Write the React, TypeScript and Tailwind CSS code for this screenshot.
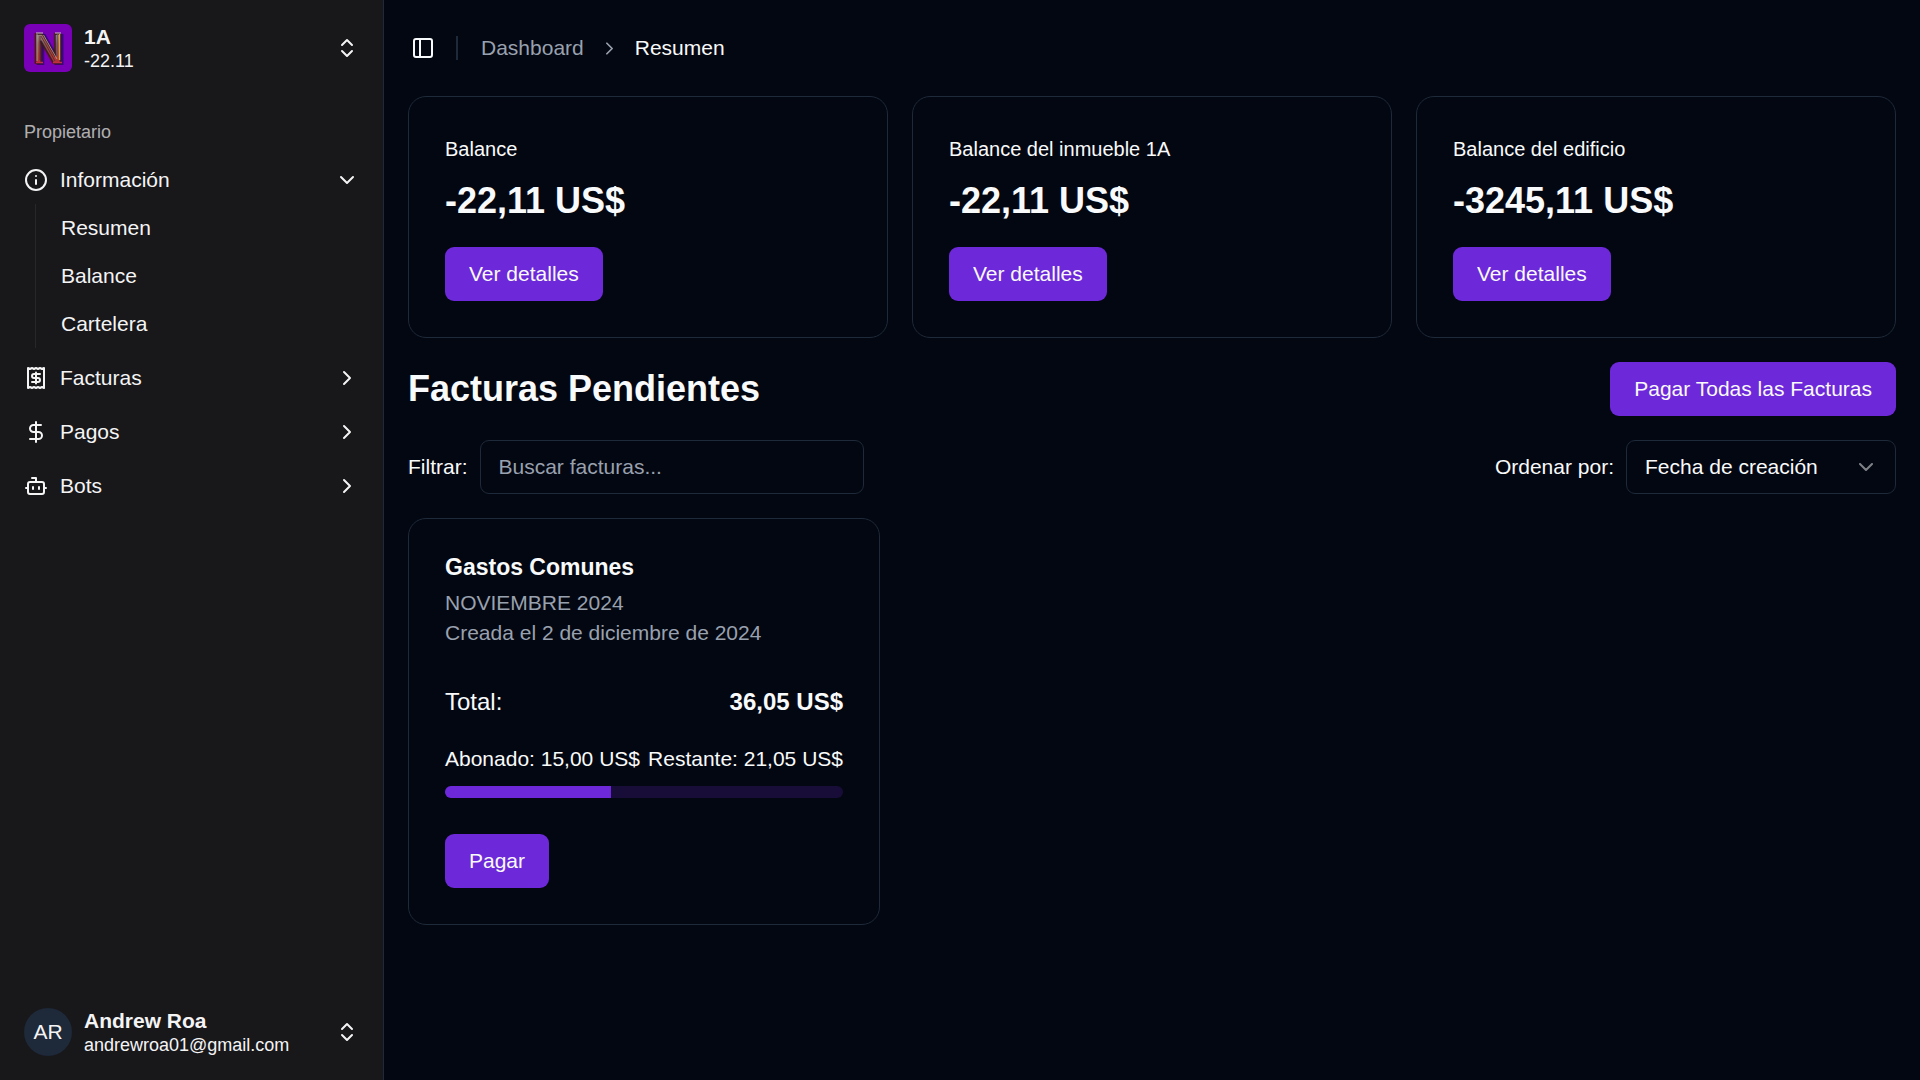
import React from "react";
import {
  Bot,
  ChevronDown,
  ChevronRight,
  ChevronsUpDown,
  DollarSign,
  Info,
  PanelLeft,
  type LucideIcon,
} from "lucide-react";

const balances = [
  { title: "Balance", amount: "-22,11 US$" },
  { title: "Balance del inmueble 1A", amount: "-22,11 US$" },
  { title: "Balance del edificio", amount: "-3245,11 US$" },
];

const infoLinks = ["Resumen", "Balance", "Cartelera"];

function BuildingLogo() {
  return (
    <svg viewBox="0 0 48 48" className="size-12 shrink-0 rounded-md" aria-hidden="true">
      <defs>
        <linearGradient id="logo-metal" x1="0" y1="0" x2="0" y2="1">
          <stop offset="0.15" stopColor="#9a8f8c" />
          <stop offset="0.4" stopColor="#8d5a4c" />
          <stop offset="0.65" stopColor="#a8402f" />
          <stop offset="0.9" stopColor="#b3263c" />
        </linearGradient>
      </defs>
      <rect width="48" height="48" fill="#7a00b8" />
      <g fontFamily="Liberation Sans, Arial, sans-serif" fontWeight="700" fontSize="42" textAnchor="middle">
        <text x="26" y="40" fill="#3d0a5c" stroke="#3d0a5c" strokeWidth="2">N</text>
        <text x="24" y="39" fill="url(#logo-metal)" stroke="#3a1a24" strokeWidth="1.5">N</text>
      </g>
      <path d="M13 10v27M19.500 11L33 35" fill="none" stroke="#b9a79a" strokeWidth="0.8" />
      <path d="M16 12v24M17 12L31 37" fill="none" stroke="#5b1f3c" strokeWidth="0.8" />
      <path d="M35.500 10v26" stroke="#dfa04c" strokeWidth="1.4" />
      <path d="M33.500 10v22" stroke="#6b4a78" strokeWidth="0.8" />
      <path d="M12 9h7M31 9h6" stroke="#c9bfb4" strokeWidth="1" />
      <path d="M12 38.500h7M29 38.500h9" stroke="#c22f45" strokeWidth="1.6" />
    </svg>
  );
}

function ReceiptIcon() {
  return (
    <svg
      viewBox="0 0 24 24"
      className="size-6 shrink-0"
      fill="none"
      stroke="currentColor"
      strokeWidth="2"
      strokeLinecap="round"
      strokeLinejoin="round"
      aria-hidden="true"
    >
      <path d="M4 2v20l2-1 2 1 2-1 2 1 2-1 2 1 2-1 2 1V2l-2 1-2-1-2 1-2-1-2 1-2-1-2 1Z" />
      <path d="M16 8h-6a2 2 0 1 0 0 4h4a2 2 0 1 1 0 4H8" />
      <path d="M12 17.500v-11" />
    </svg>
  );
}

function NavButton({
  label,
  icon,
  chevron: Chevron,
  expanded,
}: {
  label: string;
  icon: React.ReactNode;
  chevron: LucideIcon;
  expanded: boolean;
}) {
  return (
    <button
      type="button"
      aria-expanded={expanded}
      className="flex h-12 w-full items-center gap-3 rounded-lg px-3 text-left text-[21px] leading-[30px]"
    >
      {icon}
      <span className="flex-1">{label}</span>
      <Chevron className="size-6 shrink-0" />
    </button>
  );
}

function PrimaryButton({ children }: { children: React.ReactNode }) {
  return (
    <button
      type="button"
      className="h-[54px] rounded-[9px] bg-[#6d28d9] px-6 text-[21px] leading-[30px] whitespace-nowrap text-gray-50"
    >
      {children}
    </button>
  );
}

function Sidebar() {
  return (
    <aside className="sticky top-0 flex h-screen w-96 shrink-0 flex-col border-r border-gray-800 bg-zinc-900 text-zinc-100">
      <div className="p-3">
        <button type="button" className="flex h-[72px] w-full items-center gap-3 rounded-lg px-3 text-left">
          <BuildingLogo />
          <span className="grid flex-1">
            <span className="text-[21px] leading-[26px] font-bold">1A</span>
            <span className="text-[18px] leading-[22px]">-22.11</span>
          </span>
          <ChevronsUpDown className="size-6 shrink-0" />
        </button>
      </div>

      <nav aria-label="Propietario" className="flex-1 p-3">
        <h2 className="flex h-12 items-center px-3 text-[18px] leading-6 text-zinc-100/70">Propietario</h2>
        <ul className="flex flex-col gap-1.5">
          <li>
            <NavButton label="Información" icon={<Info className="size-6 shrink-0" />} chevron={ChevronDown} expanded />
            <ul className="mr-5 ml-[23px] flex flex-col gap-1.5 border-l border-zinc-800 py-[3px] pl-[13px]">
              {infoLinks.map((label) => (
                <li key={label}>
                  <a href="#" className="flex h-[42px] items-center px-3 text-[21px] leading-[30px]">
                    {label}
                  </a>
                </li>
              ))}
            </ul>
          </li>
          <li>
            <NavButton label="Facturas" icon={<ReceiptIcon />} chevron={ChevronRight} expanded={false} />
          </li>
          <li>
            <NavButton label="Pagos" icon={<DollarSign className="size-6 shrink-0" />} chevron={ChevronRight} expanded={false} />
          </li>
          <li>
            <NavButton label="Bots" icon={<Bot className="size-6 shrink-0" />} chevron={ChevronRight} expanded={false} />
          </li>
        </ul>
      </nav>

      <div className="p-3">
        <button type="button" className="flex h-[72px] w-full items-center gap-3 rounded-lg px-3 text-left">
          <span className="flex size-12 shrink-0 items-center justify-center rounded-full bg-gray-800 text-[21px] leading-[30px]">
            AR
          </span>
          <span className="grid flex-1">
            <span className="text-[21px] leading-[26px] font-bold">Andrew Roa</span>
            <span className="text-[18px] leading-[22px]">andrewroa01@gmail.com</span>
          </span>
          <ChevronsUpDown className="size-6 shrink-0" />
        </button>
      </div>
    </aside>
  );
}

function TopBar() {
  return (
    <header className="flex h-24 items-center gap-3 pr-6 pl-[18px]">
      <button type="button" aria-label="Alternar barra lateral" className="flex size-[42px] items-center justify-center">
        <PanelLeft className="size-6" />
      </button>
      <div className="mr-[11px] h-6 w-0.5 bg-gray-800" />
      <nav aria-label="Ruta">
        <ol className="flex items-center gap-[15px] text-[21px] leading-[30px]">
          <li>
            <a href="#" className="text-gray-400">Dashboard</a>
          </li>
          <li aria-hidden="true" className="text-gray-400">
            <ChevronRight className="size-[21px]" />
          </li>
          <li aria-current="page">Resumen</li>
        </ol>
      </nav>
    </header>
  );
}

function InvoiceCard() {
  const paid = 15;
  const total = 36.05;
  return (
    <article className="rounded-[18px] border border-gray-800 p-9">
      <h3 className="text-[23px] leading-6 font-bold">Gastos Comunes</h3>
      <div className="mt-[9px] text-[21px] leading-[30px] text-gray-400">
        <p>NOVIEMBRE 2024</p>
        <p>Creada el 2 de diciembre de 2024</p>
      </div>
      <div className="mt-9 flex justify-between text-2xl leading-9">
        <span>Total:</span>
        <span className="font-bold">36,05 US$</span>
      </div>
      <div className="mt-6 flex justify-between text-[21px] leading-[30px] whitespace-nowrap">
        <span>Abonado: 15,00 US$</span>
        <span>Restante: 21,05 US$</span>
      </div>
      <div
        role="progressbar"
        aria-label="Abonado"
        aria-valuemin={0}
        aria-valuemax={total}
        aria-valuenow={paid}
        className="mt-3 mb-9 h-3 overflow-hidden rounded-full bg-[#6d28d9]/20"
      >
        <div className="h-full bg-[#6d28d9]" style={{ width: `${(paid / total) * 100}%` }} />
      </div>
      <PrimaryButton>Pagar</PrimaryButton>
    </article>
  );
}

export default function App() {
  return (
    <div className="flex min-h-screen bg-[#030711] font-['Liberation_Sans',Arial,sans-serif] text-gray-50">
      <Sidebar />
      <div className="min-w-0 flex-1">
        <TopBar />
        <main className="flex flex-col gap-6 px-6 pb-6">
          <section className="grid grid-cols-3 gap-6">
            {balances.map(({ title, amount }) => (
              <article key={title} className="rounded-[18px] border border-gray-800 p-9">
                <h3 className="text-xl leading-8">{title}</h3>
                <p className="mt-3 mb-[22px] text-4xl leading-[48px] font-bold">{amount}</p>
                <PrimaryButton>Ver detalles</PrimaryButton>
              </article>
            ))}
          </section>

          <div className="flex items-center justify-between">
            <h1 className="text-4xl leading-[54px] font-bold">Facturas Pendientes</h1>
            <PrimaryButton>Pagar Todas las Facturas</PrimaryButton>
          </div>

          <div className="flex items-center justify-between text-[21px] leading-[30px]">
            <div className="flex items-center gap-3">
              <label htmlFor="filter">Filtrar:</label>
              <input
                id="filter"
                type="text"
                placeholder="Buscar facturas..."
                className="h-[54px] w-96 rounded-[9px] border border-gray-800 bg-transparent px-[18px] placeholder:text-gray-400"
              />
            </div>
            <div className="flex items-center gap-3">
              <label htmlFor="sort">Ordenar por:</label>
              <div className="relative">
                <select
                  id="sort"
                  className="h-[54px] w-[270px] appearance-none rounded-[9px] border border-gray-800 bg-[#030711] px-[18px]"
                >
                  <option>Fecha de creación</option>
                </select>
                <ChevronDown className="pointer-events-none absolute inset-y-0 right-[18px] my-auto size-6 opacity-50" />
              </div>
            </div>
          </div>

          <section className="grid grid-cols-3 gap-9">
            <InvoiceCard />
          </section>
        </main>
      </div>
    </div>
  );
}
